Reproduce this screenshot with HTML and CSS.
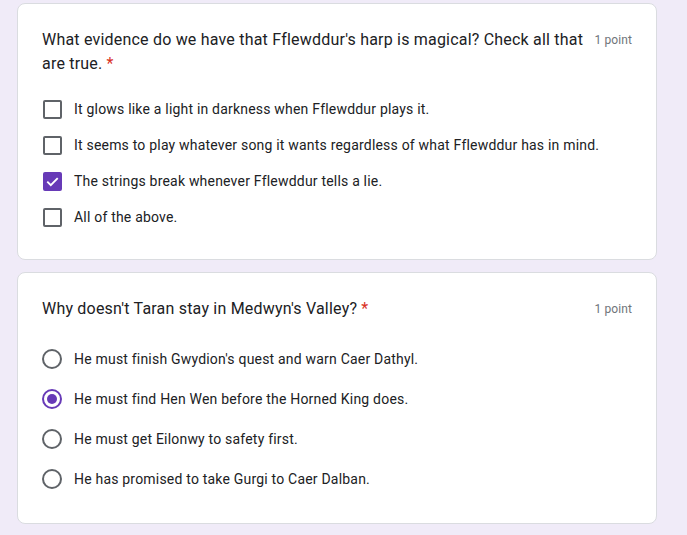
FILE: index.html
```html
<!DOCTYPE html>
<html>
<head>
<meta charset="utf-8">
<link rel="stylesheet" href="styles.css">
</head>
<body>
<div class="page">
  <div class="card">
    <div class="head">
      <div class="title">What evidence do we have that Fflewddur's harp is magical? Check all that are true. <span class="req">*</span></div>
      <div class="points">1 point</div>
    </div>
    <div class="options checks">
      <div class="opt"><span class="box"></span><span class="label">It glows like a light in darkness when Fflewddur plays it.</span></div>
      <div class="opt"><span class="box"></span><span class="label">It seems to play whatever song it wants regardless of what Fflewddur has in mind.</span></div>
      <div class="opt"><span class="box on"><svg viewBox="0 0 20 20" width="19" height="19"><path d="M4.5 10.2 L8.2 13.8 L15.5 6.4" fill="none" stroke="#fff" stroke-width="2"/></svg></span><span class="label">The strings break whenever Fflewddur tells a lie.</span></div>
      <div class="opt"><span class="box"></span><span class="label">All of the above.</span></div>
    </div>
  </div>
  <div class="card">
    <div class="head center">
      <div class="title">Why doesn't Taran stay in Medwyn's Valley? <span class="req">*</span></div>
      <div class="points">1 point</div>
    </div>
    <div class="options radios">
      <div class="opt"><span class="radio"></span><span class="label">He must finish Gwydion's quest and warn Caer Dathyl.</span></div>
      <div class="opt"><span class="radio on"></span><span class="label">He must find Hen Wen before the Horned King does.</span></div>
      <div class="opt"><span class="radio"></span><span class="label">He must get Eilonwy to safety first.</span></div>
      <div class="opt"><span class="radio"></span><span class="label">He has promised to take Gurgi to Caer Dalban.</span></div>
    </div>
  </div>
</div>
</body>
</html>
```
FILE: styles.css
```css
html, body {
  margin: 0;
  padding: 0;
  background: #f0ebf8;
  font-family: Roboto, "Liberation Sans", Arial, sans-serif;
  color: #202124;
}
.page {
  padding: 3px 0 0 17px;
  display: flex;
  flex-direction: column;
  gap: 12px;
}
.card {
  width: 640px;
  box-sizing: border-box;
  background: #fff;
  border: 1px solid #dadce0;
  border-radius: 8px;
  padding: 24px;
}
.head {
  display: flex;
  align-items: flex-start;
  gap: 6px;
}
.head.center { align-items: center; }
.title {
  flex: 1;
  font-size: 16px;
  line-height: 24px;
  letter-spacing: 0.2px;
}
.req { color: #d93025; }
.points {
  font-size: 12px;
  color: #70757a;
  line-height: 24px;
  letter-spacing: 0.1px;
  white-space: nowrap;
}
.options { display: flex; flex-direction: column; }
.checks { margin-top: 15px; }
.radios { margin-top: 18px; }
.opt {
  display: flex;
  align-items: center;
  font-size: 14px;
  letter-spacing: 0.2px;
}
.checks .opt { height: 36px; }
.radios .opt { height: 40px; }
.box {
  width: 19px;
  height: 19px;
  box-sizing: border-box;
  border: 2px solid #5f6368;
  border-radius: 2px;
  margin-left: 1px;
  margin-right: 12px;
  flex: none;
  display: flex;
}
.box.on {
  background: #673ab7;
  border-color: #673ab7;
}
.box.on svg { margin: -2px; }
.radio {
  width: 20px;
  height: 20px;
  box-sizing: border-box;
  border: 2px solid #5f6368;
  border-radius: 50%;
  margin-right: 12px;
  flex: none;
  display: flex;
  align-items: center;
  justify-content: center;
}
.radio.on { border-color: #673ab7; }
.radio.on::after {
  content: "";
  width: 10px;
  height: 10px;
  border-radius: 50%;
  background: #673ab7;
}
.label { line-height: 20px; }
```
